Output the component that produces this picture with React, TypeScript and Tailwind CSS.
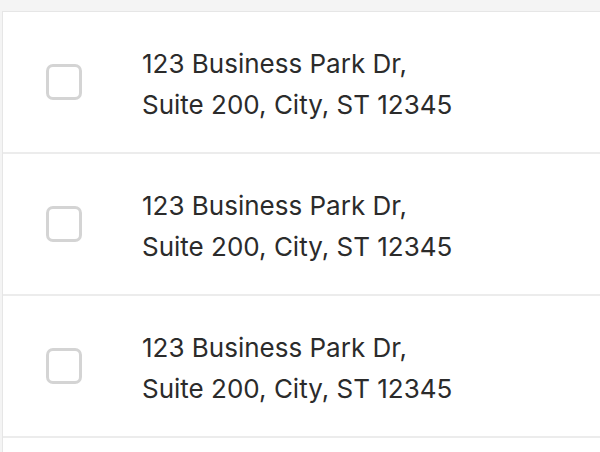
const rows = [1, 2, 3];

export default function App() {
  return (
    <div className="h-[452px] overflow-hidden bg-[#f4f4f4] pt-[11px] pl-[2px]" style={{ fontFamily: "Inter, 'Noto Sans', sans-serif" }}>
      <div className="h-full bg-white border-l border-t border-[#e6e6e6]">
        {rows.map((r) => (
          <div key={r} className="flex items-center h-[142px] border-b-2 border-[#ececec] pl-[43px]">
            <span className="w-[36px] h-[36px] rounded-[7px] border-[3px] border-[#d4d4d4] shrink-0" />
            <div className="ml-[60px] text-[26px] leading-[41px] text-[#2b2b2b] pt-[3px]">
              <div>123 Business Park Dr,</div>
              <div>Suite 200, City, ST 12345</div>
            </div>
          </div>
        ))}
      </div>
    </div>
  );
}
